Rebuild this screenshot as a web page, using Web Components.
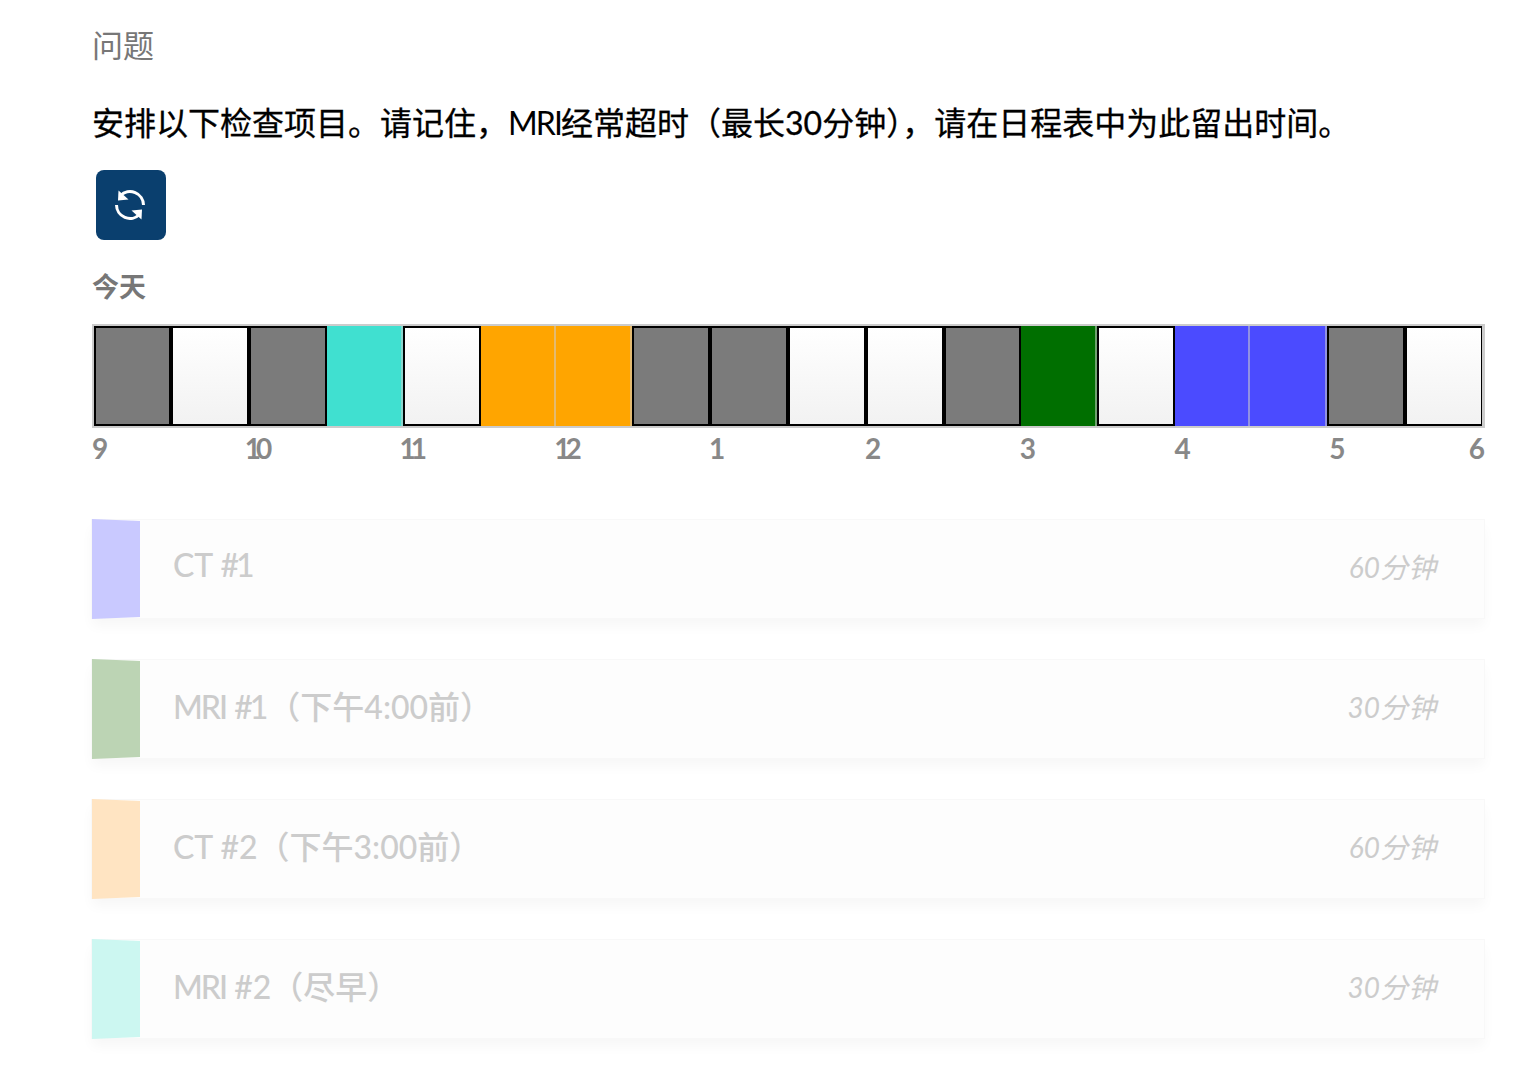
<!DOCTYPE html>
<html lang="zh-CN"><head><meta charset="utf-8"><title>问题</title>
<style>
html,body{margin:0;padding:0;background:#fff}
body{font-family:Lato,"Noto Sans CJK SC",sans-serif;width:1525px;height:1068px;overflow:hidden}
.l{letter-spacing:-2px}
.o{letter-spacing:-3px;margin-right:3px}
</style></head><body>
<template id="t-page"><style>
:host{display:block;padding:25px 41px 0 92px;box-sizing:border-box}
.q{font-size:31px;line-height:40px;color:#777;margin:0}
.p{font-size:32px;line-height:46px;color:#000;margin:35px 0 0;white-space:nowrap;-webkit-text-stroke:.3px #000}
.p span{letter-spacing:-1.9px;-webkit-text-stroke:0;font-weight:400}
.btnrow{margin:24px 0 0 4px;display:flex}
.today{font-size:27px;font-weight:700;line-height:34px;color:#777;margin:30px 0 0}
.cards{display:flex;flex-direction:column;gap:42px;margin-top:55px}
sched-timeline{margin:20px -1px 0 0}
</style>
<div class="q">问题</div>
<div class="p">安排以下检查项目。请记住，<span>MRI</span>经常超时（最长30分钟），请在日程表中为此留出时间。</div>
<div class="btnrow"><reset-button></reset-button></div>
<div class="today">今天</div>
<sched-timeline></sched-timeline>
<div class="cards"><slot></slot></div>
</template>

<template id="t-btn"><style>
:host{display:block}
button{display:flex;align-items:center;justify-content:center;width:70px;height:70px;border:0;border-radius:8px;background:#0a3f6e;padding:0}
svg{display:block;transform:translate(-1px,0)}
</style><button aria-label="重置"><svg width="32" height="32" viewBox="0 0 32 32" fill="none">
<path d="M6.5 6.5A13.5 13.5 0 0 1 29.5 16" stroke="#fff" stroke-width="3"/>
<path d="M4.5 1.5 4 11.5 14.5 10.5Z" fill="#fff"/>
<path d="M2.5 16A13.5 13.5 0 0 0 25.5 25.5" stroke="#fff" stroke-width="3"/>
<path d="M27.5 30.5 28 20.5 17.5 21.5Z" fill="#fff"/>
</svg></button></template>

<template id="t-timeline"><style>
:host{display:block}
.bar{display:flex;border:solid #ccc;border-width:2px 3px 2px 2px;height:100px;box-sizing:content-box;overflow:hidden}
.s{flex:none;box-sizing:border-box;width:78px}
.g,.w{border:2px solid #000}
.g{background:#7b7b7b}
.w{background:linear-gradient(#fff,#f2f2f2)}
.c{border-right:2px solid rgba(204,204,204,.55)}
.labels{display:grid;grid-template-columns:repeat(9,1fr);font-size:28px;font-weight:700;color:#888;line-height:34px;margin-top:3px}
.labels>span:nth-child(n+2):nth-child(-n+4){margin-left:-2px;letter-spacing:-5px}
.labels>span:nth-child(3){letter-spacing:-6px}
.labels>span:nth-child(5){margin-left:-2px}
.labels>span:nth-child(n+6){margin-left:-1px}
.last{display:flex;justify-content:space-between}
</style>
<div class="bar">
<div class="s g" style="width:77px"></div><div class="s w"></div><div class="s g"></div>
<div class="s c" style="width:76px;background:#40e0d0"></div><div class="s w"></div>
<div class="s c" style="width:75px;background:#ffa500"></div><div class="s c" style="width:76px;background:#ffa500"></div>
<div class="s g"></div><div class="s g"></div><div class="s w"></div><div class="s w"></div><div class="s g" style="width:77px"></div>
<div class="s c" style="width:76px;background:#006f00"></div><div class="s w"></div>
<div class="s c" style="width:75px;background:#4b4bff"></div><div class="s c" style="width:77px;background:#4b4bff"></div>
<div class="s g"></div><div class="s w"></div>
</div>
<div class="labels"><span>9</span><span>10</span><span>11</span><span>12</span><span>1</span><span>2</span><span>3</span><span>4</span><span class="last"><span>5</span><span>6</span></span></div>
</template>

<template id="t-card"><style>
:host{display:block;position:relative;height:98px;background:#fdfdfd;box-shadow:0 0 0 1px #f8f8f8,0 8px 12px rgba(0,0,0,.035)}
.row{display:flex;align-items:center;height:100%;padding:0 47px 6px 81px;box-sizing:border-box;justify-content:space-between}
.tab{position:absolute;left:0;top:-1px;width:48px;height:100px;background:var(--c);clip-path:polygon(0 0,100% 2px,100% 98px,0 100%)}
.name{font-size:32px;color:#ccc;font-weight:500;margin-bottom:3px}
.time{font-size:28px;font-style:italic;color:#ccc;margin-right:1px}
</style><div class="tab"></div><div class="row"><span class="name"><slot name="name"></slot></span><span class="time"><slot name="time"></slot></span></div></template>

<sched-page>
<exam-card style="--c:#c9c9ff"><span slot="name">CT <span class="o">#1</span></span><span slot="time">60分钟</span></exam-card>
<exam-card style="--c:#bcd4b4"><span slot="name"><span class="l">MRI</span> <span class="o">#1</span>（下午4:00前）</span><span slot="time">30分钟</span></exam-card>
<exam-card style="--c:#ffe4c2"><span slot="name">CT #2（下午3:00前）</span><span slot="time">60分钟</span></exam-card>
<exam-card style="--c:#ccf7f1"><span slot="name"><span class="l">MRI</span> #2（尽早）</span><span slot="time">30分钟</span></exam-card>
</sched-page>
<script>
const def=(n,t)=>customElements.define(n,class extends HTMLElement{constructor(){super();this.attachShadow({mode:'open'}).appendChild(document.getElementById(t).content.cloneNode(true))}});
def('reset-button','t-btn');def('sched-timeline','t-timeline');def('exam-card','t-card');def('sched-page','t-page');
</script>
</body></html>
